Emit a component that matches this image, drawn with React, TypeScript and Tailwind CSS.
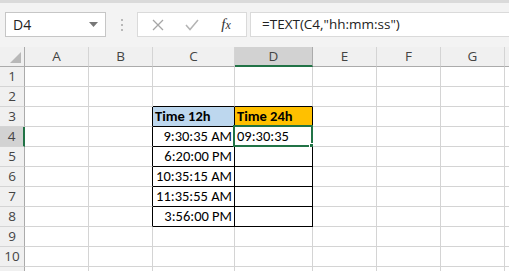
import React from "react";

const cols = [
  { k: "A", w: 64 },
  { k: "B", w: 64 },
  { k: "C", w: 82 },
  { k: "D", w: 78 },
  { k: "E", w: 64 },
  { k: "F", w: 64 },
  { k: "G", w: 64 },
  { k: "", w: 64 },
];

const times: Record<number, string> = {
  4: "9:30:35 AM",
  5: "6:20:00 PM",
  6: "10:35:15 AM",
  7: "11:35:55 AM",
  8: "3:56:00 PM",
};

const cellFont = { fontFamily: "Carlito, Calibri, Lato, 'Liberation Sans', sans-serif" };
const uiFont = { fontFamily: "'Segoe UI', 'Open Sans', 'Noto Sans', sans-serif" };

function Cell({ r, c }: { r: number; c: string }) {
  const inTable = r >= 3 && r <= 8 && (c === "C" || c === "D");
  let right = "border-r-[#d4d4d4]";
  let bottom = "border-b-[#d4d4d4]";
  if (inTable) {
    right = "border-r-black";
    bottom = "border-b-black";
  }
  if (c === "B" && r >= 3 && r <= 8) right = "border-r-black";
  if (r === 2 && (c === "C" || c === "D")) bottom = "border-b-black";
  let bg = "bg-white";
  if (r === 3 && c === "C") bg = "bg-[#bdd7ee]";
  if (r === 3 && c === "D") bg = "bg-[#ffc000]";
  let content: React.ReactNode = null;
  let align = "justify-start";
  if (r === 3 && c === "C") content = <span className="font-bold">Time 12h</span>;
  if (r === 3 && c === "D") content = <span className="font-bold">Time 24h</span>;
  if (c === "C" && times[r]) {
    content = times[r];
    align = "justify-end";
  }
  if (r === 4 && c === "D") content = "09:30:35";
  return (
    <div
      className={`relative h-[20px] border-r border-b ${right} ${bottom} ${bg} flex items-center ${align} px-[2px] text-[14.5px] leading-none text-black whitespace-nowrap`}
      style={cellFont}
    >
      {content}
      {r === 4 && c === "D" && (
        <div className="absolute left-[-2px] top-[-2px] w-[80px] h-[22px] border-2 border-[#217346] pointer-events-none">
          <div className="absolute right-[-4px] bottom-[-4px] w-[6px] h-[6px] bg-[#217346] border border-white" />
        </div>
      )}
    </div>
  );
}

export default function App() {
  const rows = [1, 2, 3, 4, 5, 6, 7, 8, 9, 10, 11];
  return (
    <div className="w-[509px] h-[271px] overflow-hidden bg-white">
      {/* Formula bar band */}
      <div className="h-[47px] bg-[#f3f3f3] border-t-[3px] border-t-[#dadada] flex items-start pt-[9px] pl-[5px]" style={uiFont}>
        <div className="w-[101px] h-[25px] bg-white border border-[#c6c6c6] flex items-center justify-between pl-[7px] pr-[7px]">
          <span className="text-[14px] text-[#222]">D4</span>
          <svg width="9" height="5" viewBox="0 0 9 5">
            <path d="M0 0 L9 0 L4.5 5 Z" fill="#777" />
          </svg>
        </div>
        <div className="w-[31px] h-[25px] flex items-center justify-center">
          <div className="flex flex-col gap-[3px]">
            <div className="w-[2px] h-[2px] bg-[#b8b8b8]" />
            <div className="w-[2px] h-[2px] bg-[#b8b8b8]" />
            <div className="w-[2px] h-[2px] bg-[#b8b8b8]" />
          </div>
        </div>
        <div className="w-[110px] h-[25px] bg-white border border-[#dadada] flex items-center">
          <div className="w-[40px] flex justify-center">
            <svg width="12" height="12" viewBox="0 0 12 12">
              <path d="M1 1 L11 11 M11 1 L1 11" stroke="#a6a6a6" strokeWidth="1.3" />
            </svg>
          </div>
          <div className="w-[28px] flex justify-center">
            <svg width="14" height="12" viewBox="0 0 14 12">
              <path d="M1 6 L5 10.5 L13 1" stroke="#b4b4b4" strokeWidth="1.5" fill="none" />
            </svg>
          </div>
          <div className="w-[40px] flex justify-center">
            <span className="italic text-[15px] text-[#333]" style={{ fontFamily: "'Liberation Serif', serif" }}>
              f<span className="text-[12px]">x</span>
            </span>
          </div>
        </div>
        <div className="ml-[3px] flex-1 h-[25px] bg-white border border-[#dadada] border-r-0 flex items-center pl-[11px]">
          <span className="text-[13.5px] text-[#222]">=TEXT(C4,"hh:mm:ss")</span>
        </div>
      </div>
      {/* Grid */}
      <div className="flex flex-col">
        {/* column header row */}
        <div className="flex h-[20px]" style={uiFont}>
          <div className="w-[25px] shrink-0 h-[20px] bg-[#f0f0f0] border-r border-b border-[#ababab] relative">
            <svg className="absolute right-[3px] bottom-[3px]" width="11" height="11" viewBox="0 0 11 11">
              <path d="M11 0 L11 11 L0 11 Z" fill="#b8b8b8" />
            </svg>
          </div>
          {cols.map((c, i) => (
            <div
              key={i}
              style={{ width: c.w }}
              className={`shrink-0 h-[20px] flex items-center justify-center text-[13.5px] border-r ${
                c.k === "D"
                  ? "bg-[#d2d2d2] border-r-[#ababab] border-b-2 border-b-[#217346] text-[#444]"
                  : "bg-[#f0f0f0] border-r-[#d4d4d4] border-b border-b-[#ababab] text-[#444]"
              }`}
            >
              {c.k}
            </div>
          ))}
        </div>
        {rows.map((r) => (
          <div key={r} className="flex">
            <div
              className={`w-[25px] shrink-0 h-[20px] flex items-center justify-center text-[13.5px] border-b border-b-[#d4d4d4] ${
                r === 4
                  ? "bg-[#d2d2d2] border-r-2 border-r-[#217346] text-[#444]"
                  : "bg-[#f0f0f0] border-r border-r-[#ababab] text-[#444]"
              }`}
              style={uiFont}
            >
              {r <= 10 ? r : ""}
            </div>
            {cols.map((c, i) => (
              <div key={i} style={{ width: c.w }} className="shrink-0">
                <Cell r={r} c={c.k} />
              </div>
            ))}
          </div>
        ))}
      </div>
    </div>
  );
}
